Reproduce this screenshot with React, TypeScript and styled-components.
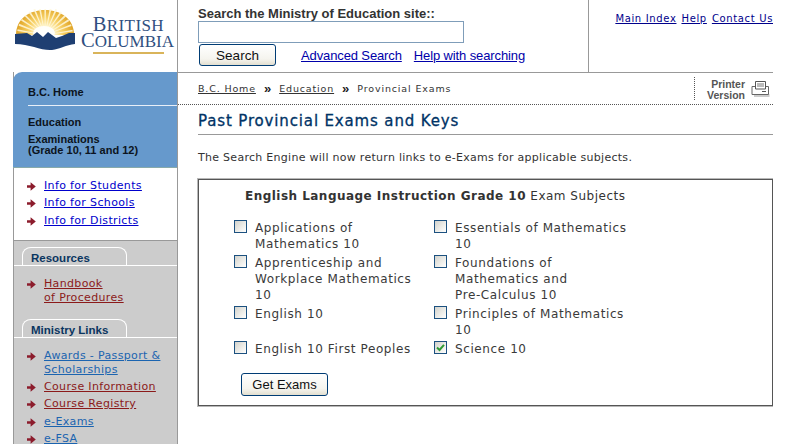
import React from "react";
import styled, { createGlobalStyle } from "styled-components";

const Global = createGlobalStyle`
  html, body { margin: 0; padding: 0; background: #fff; }
  body { width: 806px; height: 444px; overflow: hidden; font-family: "DejaVu Sans", Verdana, sans-serif; }
  a { cursor: pointer; }
`;

const Page = styled.div`
  width: 773px;
  height: 444px;
  display: grid;
  grid-template-columns: 178px 1fr;
  grid-template-rows: 72px 1fr;
  overflow: hidden;
`;

const LogoCell = styled.div`
  display: flex;
  align-items: flex-start;
  padding: 9px 0 0 14px;
  border-right: 1px solid #999;
  box-sizing: border-box;
`;

const LogoText = styled.div`
  margin-left: 5px;
  width: 94px;
  flex: none;
  font-family: "Liberation Serif", serif;
  color: #2f4f80;
  font-size: 17px;
  line-height: 15px;
  padding-top: 8px;
  white-space: nowrap;
`;
const LogoLine1 = styled.div`
  text-align: right;
  padding-right: 10px;
  letter-spacing: 0.4px;
`;
const LogoLine2 = styled.div`
  text-align: right;
`;
const BigCap = styled.span`
  font-size: 20.5px;
`;
const LogoRule = styled.div`
  height: 2px;
  width: 71px;
  background: #d9b45a;
  margin: 3px 10px 0 auto;
`;

const Header = styled.div`
  display: flex;
  border-bottom: 1px solid #999;
  height: 73px;
  box-sizing: border-box;
`;
const SearchArea = styled.form`
  width: 411px;
  box-sizing: border-box;
  padding: 6px 0 0 20px;
  border-right: 1px solid #999;
  margin: 0;
`;
const SearchLabel = styled.div`
  font-family: "Liberation Sans", Arial, sans-serif;
  font-weight: 700;
  font-size: 13px;
  line-height: 15px;
  color: #333;
`;
const SearchInput = styled.input`
  display: block;
  width: 266px;
  height: 22px;
  box-sizing: border-box;
  border: 1px solid #7f9db9;
  background: #fff;
  padding: 0;
  outline: none;
`;
const SearchRow = styled.div`
  display: flex;
  align-items: center;
  margin-top: 1px;
`;
const XpButton = styled.button<{ $w: number; $h: number }>`
  width: ${(p) => p.$w}px;
  height: ${(p) => p.$h}px;
  box-sizing: border-box;
  border: 1px solid #003c74;
  border-radius: 3px;
  background: linear-gradient(180deg, #fff 0%, #f5f4ee 70%, #e2dfd0 100%);
  font-family: "Liberation Sans", Arial, sans-serif;
  font-size: 13.5px;
  color: #111;
  padding: 0;
  cursor: pointer;
`;
const SearchButton = styled(XpButton)`
  margin-left: 1px;
`;
const SearchLink = styled.a<{ $ml: number }>`
  font-family: "Liberation Sans", Arial, sans-serif;
  font-size: 13px;
  letter-spacing: -0.12px;
  color: #0000aa;
  text-decoration: underline;
  margin-left: ${(p) => p.$ml}px;
`;
const TopLinks = styled.div`
  flex: 1;
  display: flex;
  justify-content: flex-end;
  gap: 5px;
  padding-top: 13px;
  font-size: 10px;
  line-height: 12px;
`;
const TopLink = styled.a`
  color: #00008b;
  text-decoration: underline;
  letter-spacing: 0.65px;
`;

const Sidebar = styled.nav`
  margin-left: 13px;
  box-sizing: border-box;
  display: flex;
  flex-direction: column;
  height: 372px;
  border-left: 1px solid #999;
  border-right: 1px solid #999;
`;
const BlueBlock = styled.div`
  background: #6699cc;
  height: 96px;
  margin-left: -1px;
  border-top-left-radius: 9px;
  border-bottom: 1px solid #8aa;
  box-sizing: border-box;
  font-family: "Liberation Sans", Arial, sans-serif;
  font-weight: 700;
  padding-top: 14px;
  flex: none;
`;
const BlueLine = styled.div`
  font-size: 11px;
  line-height: 13px;
  padding-left: 15px;
  color: #0c1420;
`;
const BlueHome = styled(BlueLine)`
  border-bottom: 1px solid #e8eff8;
  padding-bottom: 6px;
  margin-left: 15px;
  padding-left: 0;
  margin-bottom: 10px;
`;
const BlueExam = styled(BlueLine)`
  margin-top: 5px;
  line-height: 11px;
`;
const WhiteBlock = styled.div`
  height: 73px;
  flex: none;
  box-sizing: border-box;
  background: #fff;
  padding-top: 11px;
  border-bottom: 1px solid #999;
`;
const GreyBlock = styled.div`
  flex: 1;
  background: #cccccc;
  padding-top: 6px;
`;
const TabRow = styled.div<{ $top?: number }>`
  border-bottom: 1px solid #fff;
  padding-left: 8px;
  height: 19px;
  box-sizing: border-box;
  margin-top: ${(p) => p.$top ?? 0}px;
`;
const Tab = styled.div`
  width: 105px;
  height: 18px;
  box-sizing: border-box;
  border: 1px solid #fff;
  border-bottom: 0;
  border-radius: 9px 9px 0 0 / 8px 8px 0 0;
  font-family: "Liberation Sans", Arial, sans-serif;
  font-weight: 700;
  font-size: 11.5px;
  line-height: 21px;
  padding-left: 8px;
  color: #0a3560;
`;
const LinkList = styled.ul<{ $top: number; $gap: number }>`
  list-style: none;
  margin: 0;
  padding: ${(p) => p.$top}px 0 0 0;
  display: flex;
  flex-direction: column;
  row-gap: ${(p) => p.$gap}px;
`;
const Item = styled.li`
  display: flex;
  padding-left: 13px;
`;
const Arrow = styled.svg`
  width: 9px;
  height: 9px;
  flex: none;
  margin: 3px 8px 0 0;
  display: block;
`;
const NavLink = styled.a<{ $c: string; $lh?: number }>`
  font-size: 11px;
  line-height: ${(p) => p.$lh ?? 14}px;
  letter-spacing: 0.35px;
  color: ${(p) => p.$c};
  text-decoration: underline;
`;
const ArrowIcon = () => (
  <Arrow viewBox="0 0 9 9">
    <path d="M0 3.2h3.6V0.3L8.8 4.5 3.6 8.7V5.8H0z" fill="#8c1c2c" />
  </Arrow>
);

const Main = styled.main`
  display: flex;
  flex-direction: column;
  min-width: 0;
`;
const CrumbBar = styled.div`
  display: flex;
  height: 33px;
  box-sizing: border-box;
  border-bottom: 1px dotted #555;
  padding-left: 20px;
  justify-content: space-between;
  flex: none;
`;
const Crumbs = styled.div`
  display: flex;
  align-items: center;
  gap: 8px;
  font-size: 9.5px;
  letter-spacing: 0.85px;
  color: #333;
`;
const Crumb = styled.a`
  color: #333;
  text-decoration: underline;
`;
const Chevron = styled.span`
  font-family: "Liberation Sans", sans-serif;
  font-weight: 700;
  font-size: 13px;
  color: #222;
  letter-spacing: 0;
`;
const PrinterCell = styled.div`
  width: 79px;
  height: 23px;
  margin-top: 5px;
  box-sizing: border-box;
  border-left: 1px dotted #555;
  display: flex;
  padding-left: 11px;
  align-items: center;
  gap: 6px;
`;
const PrinterText = styled.div`
  font-family: "Liberation Sans", Arial, sans-serif;
  font-weight: 700;
  font-size: 10.5px;
  line-height: 11px;
  color: #555;
  text-align: right;
  width: 39px;
  padding-top: 3px;
`;
const Title = styled.h1`
  margin: 0 0 0 20px;
  height: 30px;
  box-sizing: border-box;
  border-bottom: 1px solid #999;
  font-size: 15px;
  font-weight: 400;
  padding-top: 2px;
  line-height: 29px;
  color: #003366;
  letter-spacing: 0.85px;
  flex: none;
  -webkit-text-stroke: 0.3px #003366;
`;
const Intro = styled.p`
  margin: 15px 0 0 20px;
  font-size: 11px;
  line-height: 16px;
  letter-spacing: 0.28px;
  color: #333;
`;
const Box = styled.form`
  margin: 13px 0 0 20px;
  height: 227px;
  box-sizing: border-box;
  border: 1px solid #555;
  box-shadow: 0 0 0 1px #b8b8b8;
  padding-left: 46px;
  padding-top: 9px;
`;
const BoxTitle = styled.div`
  font-size: 12px;
  line-height: 15px;
  color: #333;
  letter-spacing: 0.5px;
`;
const BoxTitleStrong = styled.span`
  font-weight: 700;
  letter-spacing: 0.47px;
`;
const Options = styled.div`
  display: grid;
  grid-template-columns: 200px 200px;
  margin-left: -11px;
  margin-top: 16px;
  row-gap: 3px;
`;
const Option = styled.label`
  display: flex;
  align-items: flex-start;
`;
const Check = styled.span`
  width: 13px;
  height: 13px;
  box-sizing: border-box;
  border: 1px solid #1c5180;
  background: linear-gradient(135deg, #d2d2cc 0%, #eeeeea 60%, #fff 100%);
  flex: none;
  margin: 0 8px 0 0;
  display: flex;
  align-items: center;
  justify-content: center;
`;
const OptionText = styled.span`
  font-size: 12px;
  line-height: 16px;
  color: #3a3a3a;
  letter-spacing: 0.6px;
`;
const GetButton = styled(XpButton)`
  display: block;
  margin: 16px 0 0 -4px;
  font-size: 13px;
`;

const PrinterIcon = () => (
  <svg width="19" height="18" viewBox="0 0 19 18">
    <path d="M3 14H18.5V17H3z" fill="#aaa" opacity="0.6" />
    <path d="M1 6.5h16.5V14.5H1z" fill="#fff" stroke="#666" strokeWidth="1" />
    <path d="M4.5 1.5h10V9h-10z" fill="#fff" stroke="#555" strokeWidth="1" />
    <path d="M6 4h7M6 6h7" stroke="#777" strokeWidth="1" />
    <path d="M11 11.5h4" stroke="#555" strokeWidth="1" />
  </svg>
);

const rayAngles = Array.from({ length: 15 }, (_, i) => -170 + i * 11.5);
const rays = rayAngles.map((a) => {
  const r = (a * Math.PI) / 180;
  const s = 0.035;
  const cx = 31;
  const cy = 26;
  const R = 28;
  return `M${cx} ${cy}L${(cx + R * Math.cos(r - s)).toFixed(1)} ${(cy + R * Math.sin(r - s)).toFixed(1)}L${(cx + R * Math.cos(r + s)).toFixed(1)} ${(cy + R * Math.sin(r + s)).toFixed(1)}z`;
});

const Logo = () => (
  <svg width="61" height="43" viewBox="0 0 61 43" style={{ flex: "none", display: "block" }}>
    <defs>
      <radialGradient id="sun" gradientUnits="userSpaceOnUse" cx="31" cy="26" r="30">
        <stop offset="0" stopColor="#ffffff" />
        <stop offset="0.3" stopColor="#fff4c8" />
        <stop offset="0.6" stopColor="#f7cf63" />
        <stop offset="1" stopColor="#dd9f1e" />
      </radialGradient>
    </defs>
    <path d="M2 26C2 10 15 1 31 1s29 9 29 25z" fill="url(#sun)" />
    <path d={rays.join("")} fill="#fff8dc" opacity="0.85" />
    <ellipse cx="30" cy="24" rx="11" ry="7" fill="#fff" opacity="0.9" />
    <path
      d="M1 25L13 24 18 27 23 23 29 28 34 23 42 29 48 27 55 24 61 24V35C52 36 46 40 38 41 28 42 16 35 1 35Z"
      fill="#1f3f72"
    />
  </svg>
);

const resources = [{ t: <>Handbook<br />of Procedures</>, c: "#8b1a1a" }];
const ministry = [
  { t: <>Awards - Passport &amp;<br />Scholarships</>, c: "#1b64b0", lh: 13.5 },
  { t: "Course Information", c: "#8b1a1a" },
  { t: "Course Registry", c: "#8b1a1a" },
  { t: "e-Exams", c: "#1b64b0" },
  { t: "e-FSA", c: "#1b64b0" },
];
const left = [
  <>Applications of<br />Mathematics 10</>,
  <>Apprenticeship and<br />Workplace Mathematics<br />10</>,
  <>English 10</>,
  <>English 10 First Peoples</>,
];
const right = [
  <>Essentials of Mathematics<br />10</>,
  <>Foundations of<br />Mathematics and<br />Pre-Calculus 10</>,
  <>Principles of Mathematics<br />10</>,
  <>Science 10</>,
];

export default function App() {
  return (
    <>
      <Global />
      <Page>
        <LogoCell>
          <Logo />
          <LogoText>
            <LogoLine1><BigCap>B</BigCap>RITISH</LogoLine1>
            <LogoLine2><BigCap>C</BigCap>OLUMBIA</LogoLine2>
            <LogoRule />
          </LogoText>
        </LogoCell>
        <Header>
          <SearchArea>
            <SearchLabel>Search the Ministry of Education site::</SearchLabel>
            <SearchInput />
            <SearchRow>
              <SearchButton type="button" $w={77} $h={22}>Search</SearchButton>
              <SearchLink $ml={25}>Advanced Search</SearchLink>
              <SearchLink $ml={12}>Help with searching</SearchLink>
            </SearchRow>
          </SearchArea>
          <TopLinks>
            <TopLink>Main Index</TopLink>
            <TopLink>Help</TopLink>
            <TopLink>Contact Us</TopLink>
          </TopLinks>
        </Header>
        <Sidebar>
          <BlueBlock>
            <BlueHome>B.C. Home</BlueHome>
            <BlueLine>Education</BlueLine>
            <BlueExam>Examinations<br />(Grade 10, 11 and 12)</BlueExam>
          </BlueBlock>
          <WhiteBlock>
            <LinkList $top={0} $gap={3.4}>
              {["Info for Students", "Info for Schools", "Info for Districts"].map((t) => (
                <Item key={t}><ArrowIcon /><NavLink $c="#0000cc">{t}</NavLink></Item>
              ))}
            </LinkList>
          </WhiteBlock>
          <GreyBlock>
            <TabRow><Tab>Resources</Tab></TabRow>
            <LinkList $top={11} $gap={3}>
              {resources.map((r, i) => (
                <Item key={i}><ArrowIcon /><NavLink $c={r.c}>{r.t}</NavLink></Item>
              ))}
            </LinkList>
            <TabRow $top={14}><Tab>Ministry Links</Tab></TabRow>
            <LinkList $top={11} $gap={3.5}>
              {ministry.map((r, i) => (
                <Item key={i}><ArrowIcon /><NavLink $c={r.c} $lh={r.lh}>{r.t}</NavLink></Item>
              ))}
            </LinkList>
          </GreyBlock>
        </Sidebar>
        <Main>
          <CrumbBar>
            <Crumbs>
              <Crumb>B.C. Home</Crumb>
              <Chevron>»</Chevron>
              <Crumb>Education</Crumb>
              <Chevron>»</Chevron>
              <span>Provincial Exams</span>
            </Crumbs>
            <PrinterCell>
              <PrinterText>Printer<br />Version</PrinterText>
              <PrinterIcon />
            </PrinterCell>
          </CrumbBar>
          <Title>Past Provincial Exams and Keys</Title>
          <Intro>The Search Engine will now return links to e-Exams for applicable subjects.</Intro>
          <Box>
            <BoxTitle><BoxTitleStrong>English Language Instruction Grade 10</BoxTitleStrong> Exam Subjects</BoxTitle>
            <Options>
              {left.map((l, i) => (
                <React.Fragment key={i}>
                  <Option><Check /><OptionText>{l}</OptionText></Option>
                  <Option>
                    <Check>
                      {i === 3 && (
                        <svg width="9" height="9" viewBox="0 0 9 9">
                          <path d="M1 4.5L3.5 7 8 1.8" fill="none" stroke="#2f9a34" strokeWidth="2" />
                        </svg>
                      )}
                    </Check>
                    <OptionText>{right[i]}</OptionText>
                  </Option>
                </React.Fragment>
              ))}
            </Options>
            <GetButton type="button" $w={87} $h={23}>Get Exams</GetButton>
          </Box>
        </Main>
      </Page>
    </>
  );
}
